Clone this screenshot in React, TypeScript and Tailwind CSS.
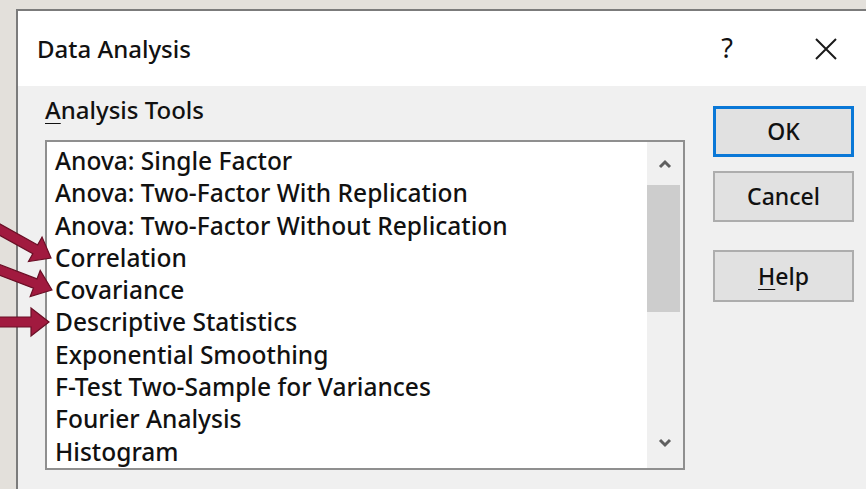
const tools = [
  "Anova: Single Factor",
  "Anova: Two-Factor With Replication",
  "Anova: Two-Factor Without Replication",
  "Correlation",
  "Covariance",
  "Descriptive Statistics",
  "Exponential Smoothing",
  "F-Test Two-Sample for Variances",
  "Fourier Analysis",
  "Histogram",
]

// callout arrows, tip position + rotation in degrees
const arrows = [
  { x: 51, y: 258, angle: 29 },
  { x: 52, y: 290, angle: 21 },
  { x: 49, y: 322, angle: 0 },
]

function Chevron({ up }: { up?: boolean }) {
  return (
    <svg width="14" height="10" viewBox="0 0 14 10">
      <polyline
        points={up ? "2,8 7,3 12,8" : "2,2 7,7 12,2"}
        fill="none"
        stroke="#5f5f5f"
        strokeWidth="3"
      />
    </svg>
  )
}

function DialogButton({
  children,
  focused,
  className = "",
}: {
  children: React.ReactNode
  focused?: boolean
  className?: string
}) {
  return (
    <div
      className={`flex h-[51px] w-[141px] items-center justify-center bg-[#e1e1e1] text-[23px] font-medium text-[#111] ${
        focused ? "border-[3px] border-[#0a78d7]" : "border-2 border-[#adadad]"
      } ${className}`}
    >
      {children}
    </div>
  )
}

export default function App() {
  return (
    <div
      className="relative h-[489px] w-[866px] overflow-hidden bg-[#e3e0db] pl-[16px] pt-[9px]"
      style={{ fontFamily: '"Noto Sans", "Open Sans", sans-serif' }}
    >
      <div className="h-[520px] w-[880px] border-l-2 border-t-2 border-[#7b7b7b] bg-[#f0f0f0]">
        {/* title bar */}
        <div className="flex h-[75px] items-center bg-white pl-[19px] pr-[50px] text-[24px] font-medium text-[#111]">
          <span>Data Analysis</span>
          <div className="flex-1" />
          <span className="w-[40px] text-center text-[27px] font-normal text-[#111]">?</span>
          <div className="ml-[59px] flex w-[40px] justify-center">
            <svg width="24" height="24" viewBox="0 0 24 24">
              <path d="M2 2 L22 22 M22 2 L2 22" stroke="#1a1a1a" strokeWidth="2" />
            </svg>
          </div>
        </div>

        <div className="flex">
          <div className="pl-[27px] pt-[10px]">
            <div className="h-[28px] text-[24px] font-medium leading-[28px] text-[#111]">
              <span className="underline decoration-1 underline-offset-[4px]">A</span>nalysis Tools
            </div>
            <div className="mt-[16px] flex h-[330px] w-[640px] border-2 border-[#8f8f8f] bg-white">
              <ul className="flex-1 pl-[8px] pt-[3px] text-[24.5px] font-medium leading-[32.3px] text-[#111]">
                {tools.map((t) => (
                  <li key={t} className="whitespace-nowrap">
                    {t}
                  </li>
                ))}
              </ul>
              <div className="flex w-[36px] flex-col items-center bg-[#f0f0f0]">
                <div className="flex h-[43px] items-center">
                  <Chevron up />
                </div>
                <div className="h-[127px] w-[33px] self-start bg-[#cdcdcd]" />
                <div className="flex-1" />
                <div className="flex h-[50px] items-center">
                  <Chevron />
                </div>
              </div>
            </div>
          </div>

          <div className="ml-[28px] pt-[20px]">
            <DialogButton focused>OK</DialogButton>
            <DialogButton className="mt-[14px]">Cancel</DialogButton>
            <DialogButton className="mt-[28px] h-[52px]">
              <span>
                <span className="underline decoration-1 underline-offset-[4px]">H</span>elp
              </span>
            </DialogButton>
          </div>
        </div>
      </div>

      <svg className="pointer-events-none absolute left-0 top-0" width="866" height="489">
        {arrows.map((a, i) => (
          <polygon
            key={i}
            transform={`translate(${a.x} ${a.y}) rotate(${a.angle})`}
            points="0,0 -18,-14 -18,-5 -140,-5 -140,5 -18,5 -18,14"
            fill="#a11a3f"
            stroke="#6a0f26"
            strokeWidth="1.2"
            strokeLinejoin="miter"
          />
        ))}
      </svg>
    </div>
  )
}
